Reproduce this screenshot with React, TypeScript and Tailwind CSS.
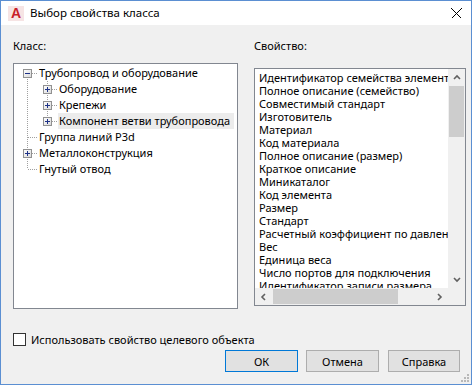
import React from "react";

type Box = "plus" | "minus" | null;

interface GuideProps {
  up?: boolean;
  down?: boolean;
  branch?: boolean;
  box?: Box;
}

// one 20x16 column of the tree's connector lines
function Guide({ up, down, branch, box }: GuideProps) {
  return (
    <svg width="20" height="16" className="shrink-0" shapeRendering="crispEdges">
      {up && <line x1="9.5" y1="0" x2="9.5" y2="8" stroke="#a0a0a0" strokeDasharray="1 1" />}
      {down && <line x1="9.5" y1="8" x2="9.5" y2="16" stroke="#a0a0a0" strokeDasharray="1 1" />}
      {branch && <line x1="10" y1="8.5" x2="20" y2="8.5" stroke="#a0a0a0" strokeDasharray="1 1" />}
      {box && (
        <g>
          <defs>
            <linearGradient id="bx" x1="0" y1="0" x2="1" y2="1">
              <stop offset="0" stopColor="#ffffff" />
              <stop offset="1" stopColor="#d8d8d8" />
            </linearGradient>
          </defs>
          <rect x="5.5" y="4.5" width="8" height="8" fill="url(#bx)" stroke="#919191" />
          <line x1="7" y1="8.5" x2="12" y2="8.5" stroke="#1e3287" />
          {box === "plus" && <line x1="9.5" y1="6" x2="9.5" y2="11" stroke="#1e3287" />}
        </g>
      )}
    </svg>
  );
}

interface TreeRow {
  guides: GuideProps[];
  label: string;
  selected?: boolean;
}

const treeRows: TreeRow[] = [
  { guides: [{ down: true, branch: true, box: "minus" }], label: "Трубопровод и оборудование" },
  {
    guides: [{ up: true, down: true }, { up: true, down: true, branch: true, box: "plus" }],
    label: "Оборудование",
  },
  {
    guides: [{ up: true, down: true }, { up: true, down: true, branch: true, box: "plus" }],
    label: "Крепежи",
  },
  {
    guides: [{ up: true, down: true }, { up: true, branch: true, box: "plus" }],
    label: "Компонент ветви трубопровода",
    selected: true,
  },
  { guides: [{ up: true, down: true, branch: true }], label: "Группа линий P3d" },
  { guides: [{ up: true, down: true, branch: true, box: "plus" }], label: "Металлоконструкция" },
  { guides: [{ up: true, branch: true }], label: "Гнутый отвод" },
];

const properties = [
  "Идентификатор семейства элемента",
  "Полное описание (семейство)",
  "Совместимый стандарт",
  "Изготовитель",
  "Материал",
  "Код материала",
  "Полное описание (размер)",
  "Краткое описание",
  "Миникаталог",
  "Код элемента",
  "Размер",
  "Стандарт",
  "Расчетный коэффициент по давлению",
  "Вес",
  "Единица веса",
  "Число портов для подключения",
  "Идентификатор записи размера",
];

function Chevron({ dir }: { dir: "up" | "down" | "left" | "right" }) {
  const pts = {
    up: "1,5 4,2 7,5",
    down: "1,2 4,5 7,2",
    left: "5,1 2,4 5,7",
    right: "2,1 5,4 2,7",
  }[dir];
  return (
    <svg width="8" height="8">
      <polyline points={pts} fill="none" stroke="#606060" strokeWidth="1.6" />
    </svg>
  );
}

function DialogButton({ label, primary, width }: { label: string; primary?: boolean; width: string }) {
  return (
    <button
      className={
        "h-[22px] bg-[#e1e1e1] border text-[11px] leading-none text-black " +
        width +
        (primary ? " border-[#0078d7]" : " border-[#adadad]")
      }
    >
      {label}
    </button>
  );
}

export default function App() {
  return (
    <div className="relative w-[472px] h-[385px] flex flex-col border border-[#5b8fd2] bg-[#f0f0f0] text-[11px] text-black font-['Noto_Sans',sans-serif] overflow-hidden">
      {/* title bar */}
      <div className="h-[24px] shrink-0 bg-white flex items-center">
        <div className="ml-[7px] w-[16px] h-[15px] bg-[#f6e4e4] flex items-center justify-center">
          <span className="text-[14px] font-bold leading-none text-[#c8202a] font-['Liberation_Sans',sans-serif]">A</span>
        </div>
        <span className="ml-[6px] text-[11.5px] leading-none">Выбор свойства класса</span>
        <svg width="11" height="11" className="ml-auto mr-[9px]" shapeRendering="crispEdges">
          <line x1="0.5" y1="0.5" x2="10.5" y2="10.5" stroke="#000" />
          <line x1="10.5" y1="0.5" x2="0.5" y2="10.5" stroke="#000" />
        </svg>
      </div>

      {/* body */}
      <div className="flex-1 flex flex-col pl-[12px]">
        <div className="flex mt-[13px]">
          {/* class column */}
          <div className="w-[225px] flex flex-col">
            <div className="h-[16px] leading-[16px]">Класс:</div>
            <div className="mt-[9px] h-[246px] border border-[#828790] bg-white pt-[1px] pl-[4px]">
              {treeRows.map((r) => (
                <div key={r.label} className="flex h-[16px] items-center">
                  {r.guides.map((g, i) => (
                    <Guide key={i} {...g} />
                  ))}
                  <span
                    className={
                      "h-[16px] leading-[16px] pl-[1px] whitespace-nowrap " +
                      (r.selected ? "bg-[#ececec] pr-[4px]" : "pr-[2px]")
                    }
                  >
                    {r.label}
                  </span>
                </div>
              ))}
            </div>
          </div>

          {/* property column */}
          <div className="ml-[16px] w-[212px] flex flex-col">
            <div className="h-[16px] leading-[16px]">Свойство:</div>
            <div className="mt-[14px] h-[238px] border border-[#828790] bg-white grid grid-cols-[1fr_17px] grid-rows-[1fr_17px]">
              <div className="overflow-hidden pt-[2px] pl-[4px]">
                {properties.map((p) => (
                  <div key={p} className="h-[13px] leading-[13px] whitespace-nowrap">
                    {p}
                  </div>
                ))}
              </div>
              <div className="bg-[#f0f0f0] flex flex-col">
                <div className="h-[17px] flex items-center justify-center">
                  <Chevron dir="up" />
                </div>
                <div className="h-[51px] mx-[1px] bg-[#cdcdcd]" />
                <div className="flex-1" />
                <div className="h-[17px] flex items-center justify-center">
                  <Chevron dir="down" />
                </div>
              </div>
              <div className="bg-[#f0f0f0] flex">
                <div className="w-[17px] flex items-center justify-center">
                  <Chevron dir="left" />
                </div>
                <div className="w-[125px] ml-[1px] my-[1px] bg-[#cdcdcd]" />
                <div className="flex-1" />
                <div className="w-[17px] flex items-center justify-center">
                  <Chevron dir="right" />
                </div>
              </div>
              <div className="bg-[#f0f0f0]" />
            </div>
          </div>
        </div>

        {/* target object checkbox */}
        <div className="mt-[24px] flex items-center h-[13px]">
          <div className="w-[13px] h-[13px] border border-[#333333] bg-white" />
          <span className="ml-[5px] leading-none">Использовать свойство целевого объекта</span>
        </div>

        {/* buttons */}
        <div className="mt-[4px] flex justify-end pr-[11px]">
          <DialogButton label="ОК" primary width="w-[73px]" />
          <div className="w-[8px]" />
          <DialogButton label="Отмена" width="w-[73px]" />
          <div className="w-[9px]" />
          <DialogButton label="Справка" width="w-[72px]" />
        </div>
      </div>

      {/* size grip */}
      <svg width="12" height="12" className="absolute right-[1px] bottom-[1px]" shapeRendering="crispEdges">
        {[
          [9, 3],
          [9, 6],
          [6, 6],
          [9, 9],
          [6, 9],
          [3, 9],
        ].map(([x, y], i) => (
          <rect key={i} x={x} y={y} width="2" height="2" fill="#b8b8b8" />
        ))}
      </svg>
    </div>
  );
}
